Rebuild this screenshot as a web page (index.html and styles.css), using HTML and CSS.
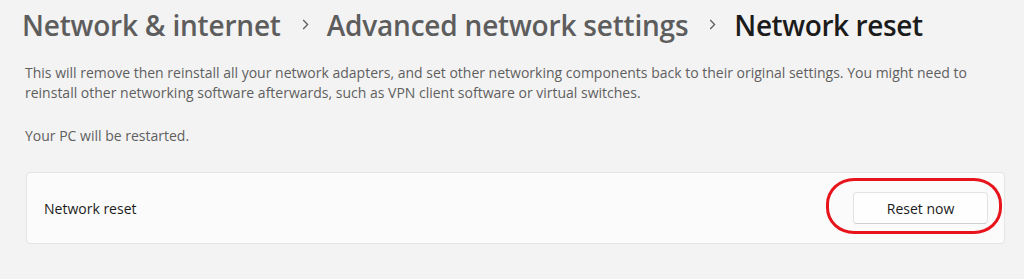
FILE: index.html
```html
<!DOCTYPE html>
<html>
<head>
<meta charset="utf-8">
<link rel="stylesheet" href="styles.css">
</head>
<body>
<main class="page">
  <h1 class="crumbs">
    <span class="crumb">Network &amp; internet</span>
    <svg class="chev" width="7" height="11" viewBox="0 0 7 11"><path d="M1.2 1 L5.6 5.5 L1.2 10" fill="none" stroke="#5d5d5d" stroke-width="1.3"/></svg>
    <span class="crumb">Advanced network settings</span>
    <svg class="chev" width="7" height="11" viewBox="0 0 7 11"><path d="M1.2 1 L5.6 5.5 L1.2 10" fill="none" stroke="#5d5d5d" stroke-width="1.3"/></svg>
    <span class="crumb current">Network reset</span>
  </h1>
  <p class="desc">This will remove then reinstall all your network adapters, and set other networking components back to their original settings. You might need to reinstall other networking software afterwards, such as VPN client software or virtual switches.</p>
  <p class="desc restart">Your PC will be restarted.</p>
  <section class="card">
    <span class="card-label">Network reset</span>
    <div class="btn-wrap">
      <button class="btn">Reset now</button>
      <span class="annot"></span>
    </div>
  </section>
</main>
</body>
</html>
```
FILE: styles.css
```css
html, body {
  margin: 0;
  padding: 0;
  background: #ffffff;
}
.page {
  width: 1024px;
  height: 279px;
  background: #f3f3f3;
  box-sizing: border-box;
  padding: 6px 0 0 0;
  font-family: "Open Sans", "Noto Sans", sans-serif;
  overflow: hidden;
}
.crumbs {
  margin: 0 0 0 22px;
  display: flex;
  align-items: center;
  font-size: 28px;
  font-weight: 600;
  line-height: 38px;
  color: #5d5d5d;
  letter-spacing: -0.2px;
}
.chev {
  margin: 0 18px 0 21px;
  position: relative;
  top: -1px;
}
.crumb.current {
  color: #1b1b1b;
  letter-spacing: -0.4px;
}
.desc {
  margin: 19px 0 0 25px;
  width: 960px;
  font-size: 14px;
  line-height: 20px;
  color: #5f5f5f;
}
.desc.restart {
  margin-top: 23px;
}
.card {
  margin: 26px 0 0 26px;
  width: 979px;
  height: 72px;
  box-sizing: border-box;
  background: #fbfbfb;
  border: 1px solid #e5e5e5;
  border-radius: 4px;
  display: flex;
  align-items: center;
  justify-content: space-between;
  padding: 0 16px 0 17px;
}
.card-label {
  font-size: 14px;
  color: #1b1b1b;
}
.btn-wrap {
  position: relative;
  display: flex;
}
.btn {
  width: 135px;
  height: 32px;
  background: #fefefe;
  border: 1px solid #e3e3e3;
  border-bottom-color: #cfcfcf;
  border-radius: 4px;
  font-family: "Open Sans", "Noto Sans", sans-serif;
  font-size: 14px;
  color: #1b1b1b;
  padding: 0;
}
.annot {
  position: absolute;
  left: -27px;
  right: -14px;
  top: -14px;
  bottom: -10px;
  border: 3px solid #e8141c;
  border-radius: 28px / 26px;
  pointer-events: none;
}
```
